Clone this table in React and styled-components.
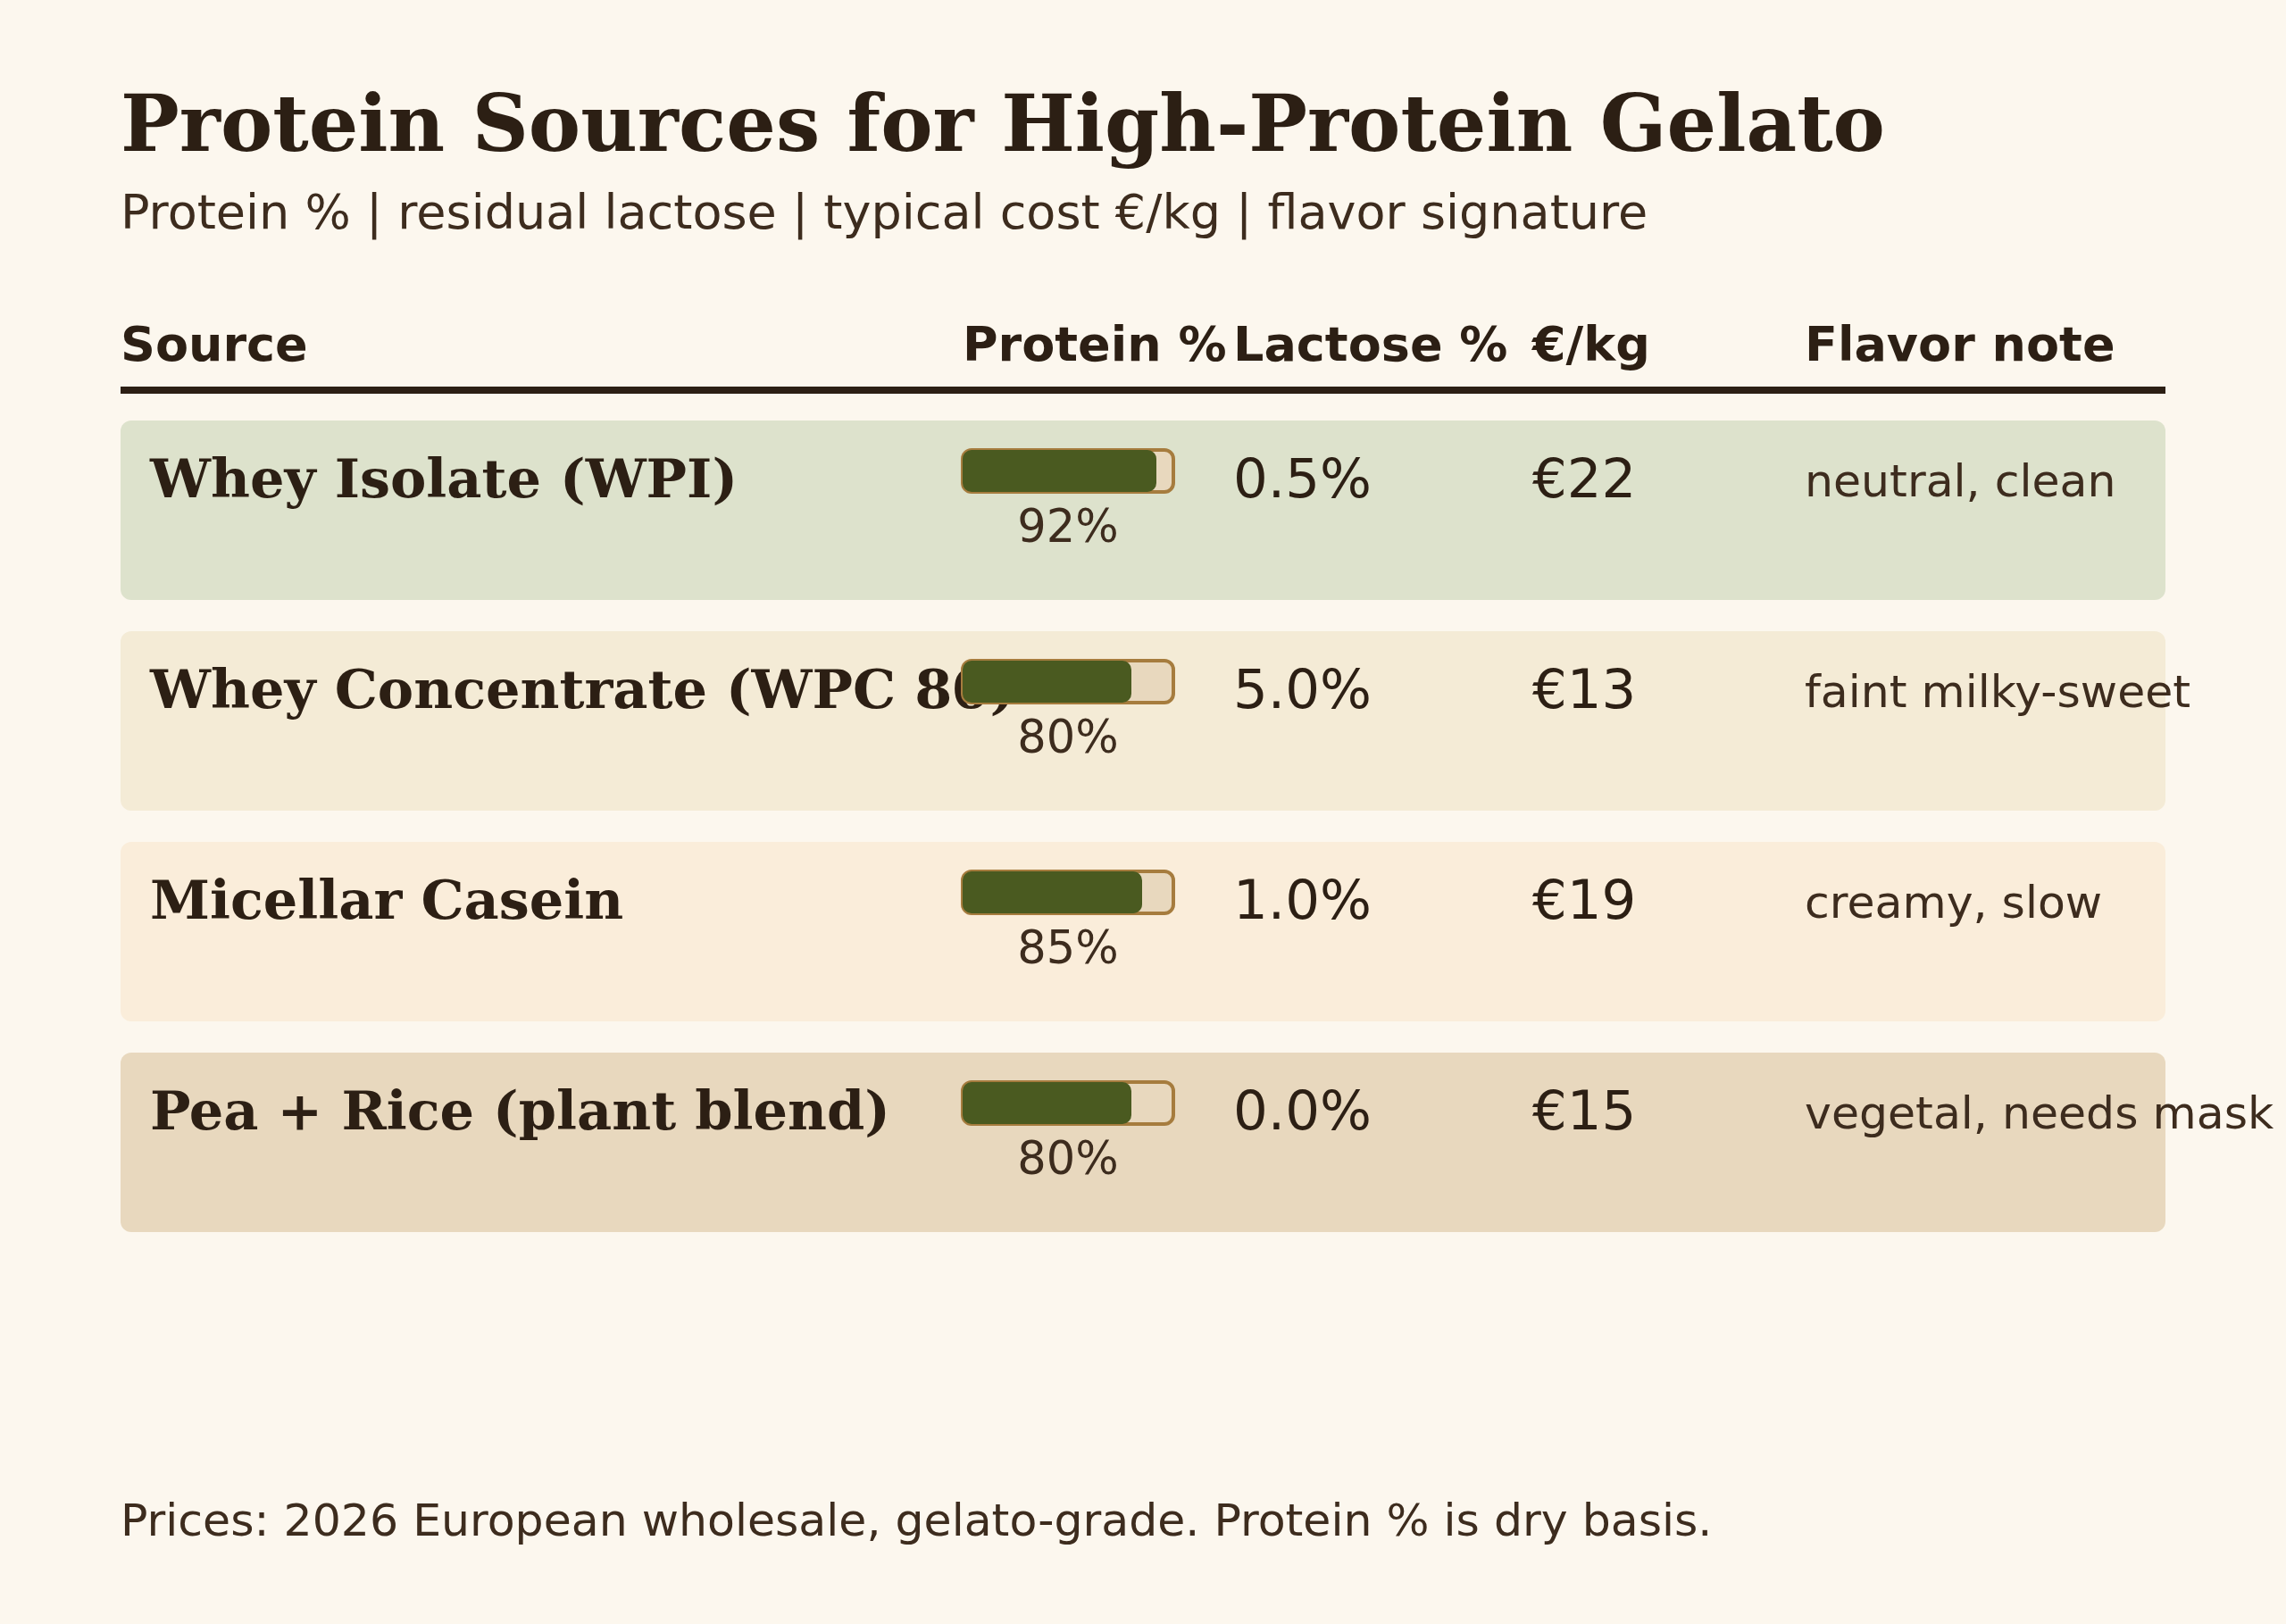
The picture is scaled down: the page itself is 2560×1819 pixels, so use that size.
import React from 'react';
import styled, { createGlobalStyle } from 'styled-components';

const GlobalStyle = createGlobalStyle`
  html, body {
    margin: 0;
    padding: 0;
    background: #fcf7ee;
    overflow: hidden;
  }
`

const serif = `"DejaVu Serif", "Liberation Serif", serif`;
const sans = `"DejaVu Sans", "Liberation Sans", sans-serif`;

const COLS = '943px 303px 335px 305px 404px';

const Page = styled.main`
  min-height: 100vh;
  padding: 95px 135px 0 135px;
  box-sizing: border-box;
  color: #2c1f14;
`

const Title = styled.h1`
  margin: 0;
  font-family: ${serif};
  font-weight: 700;
  font-size: 87.5px;
  line-height: 1;
  color: #2c1f14;
  white-space: nowrap;
`

const Subtitle = styled.p`
  margin: 28px 0 0 0;
  font-family: ${sans};
  font-size: 54px;
  line-height: 1;
  color: #3d2c1e;
  white-space: nowrap;
`

const HeaderRow = styled.div`
  display: grid;
  grid-template-columns: ${COLS};
  margin-top: 94px;
  padding-bottom: 20px;
  border-bottom: 8px solid #2c1f14;
`

const HeadCell = styled.div`
  font-family: ${sans};
  font-weight: 700;
  font-size: 54px;
  line-height: 1;
  white-space: nowrap;
`

const Rows = styled.div`
  display: flex;
  flex-direction: column;
  gap: 35px;
  margin-top: 30px;
`

const Row = styled.div`
  display: grid;
  grid-template-columns: ${COLS};
  align-items: start;
  height: 201px;
  border-radius: 12px;
  background: ${p => p.$bg};
`

const SourceName = styled.div`
  padding: 35px 0 0 33px;
  font-family: ${serif};
  font-weight: 700;
  font-size: 60.5px;
  line-height: 1;
  white-space: nowrap;
`

const ProteinCell = styled.div`
  position: relative;
  margin-left: -2px;
  padding-top: 31px;
  width: 240px;
  display: flex;
  flex-direction: column;
  align-items: center;
`

const Track = styled.div`
  width: 240px;
  height: 51px;
  box-sizing: border-box;
  border: 4px solid #a67c3e;
  border-radius: 12px;
  background: #e8d8be;
  position: relative;
`

const Fill = styled.div`
  position: absolute;
  left: -2px;
  top: -2px;
  bottom: -2px;
  border-radius: 10px;
  background: #4a5a20;
`

const PctLabel = styled.div`
  margin-top: 11px;
  font-family: ${sans};
  font-size: 51px;
  line-height: 1;
  color: #3d2c1e;
`

const Value = styled.div`
  padding-top: 34px;
  font-family: ${sans};
  font-size: 61px;
  line-height: 1;
  white-space: nowrap;
`

const Note = styled.div`
  padding-top: 43px;
  font-family: ${sans};
  font-size: 50.5px;
  line-height: 1;
  color: #3d2c1e;
  white-space: nowrap;
`

const Footer = styled.p`
  margin: 298px 0 0 0;
  font-family: ${sans};
  font-size: 50.5px;
  line-height: 1;
  color: #3d2c1e;
  white-space: nowrap;
`

const sources = [
  { name: 'Whey Isolate (WPI)', protein: 92, lactose: '0.5%', price: '€22', note: 'neutral, clean', bg: '#dde2cc' },
  { name: 'Whey Concentrate (WPC 80)', protein: 80, lactose: '5.0%', price: '€13', note: 'faint milky-sweet', bg: '#f4ebd6' },
  { name: 'Micellar Casein', protein: 85, lactose: '1.0%', price: '€19', note: 'creamy, slow', bg: '#faedda' },
  { name: 'Pea + Rice (plant blend)', protein: 80, lactose: '0.0%', price: '€15', note: 'vegetal, needs mask', bg: '#e8d8be' },
];

function ProteinBar({ value }) {
  // fill overlaps the track border by 2px on the left
  const w = Math.round(236 * value / 100);
  return (
    <ProteinCell>
      <Track>
        <Fill style={{ width: w }} />
      </Track>
      <PctLabel>{value}%</PctLabel>
    </ProteinCell>
  )
}

export default function App() {
  return (
    <>
      <GlobalStyle />
      <Page>
        <Title>Protein Sources for High-Protein Gelato</Title>
        <Subtitle>Protein % | residual lactose | typical cost €/kg | flavor signature</Subtitle>

        <HeaderRow>
          <HeadCell>Source</HeadCell>
          <HeadCell>Protein %</HeadCell>
          <HeadCell>Lactose %</HeadCell>
          <HeadCell>€/kg</HeadCell>
          <HeadCell>Flavor note</HeadCell>
        </HeaderRow>

        <Rows>
          {sources.map(s => (
            <Row key={s.name} $bg={s.bg}>
              <SourceName>{s.name}</SourceName>
              <ProteinBar value={s.protein} />
              <Value>{s.lactose}</Value>
              <Value>{s.price}</Value>
              <Note>{s.note}</Note>
            </Row>
          ))}
        </Rows>

        <Footer>Prices: 2026 European wholesale, gelato-grade. Protein % is dry basis.</Footer>
      </Page>
    </>
  )
}
